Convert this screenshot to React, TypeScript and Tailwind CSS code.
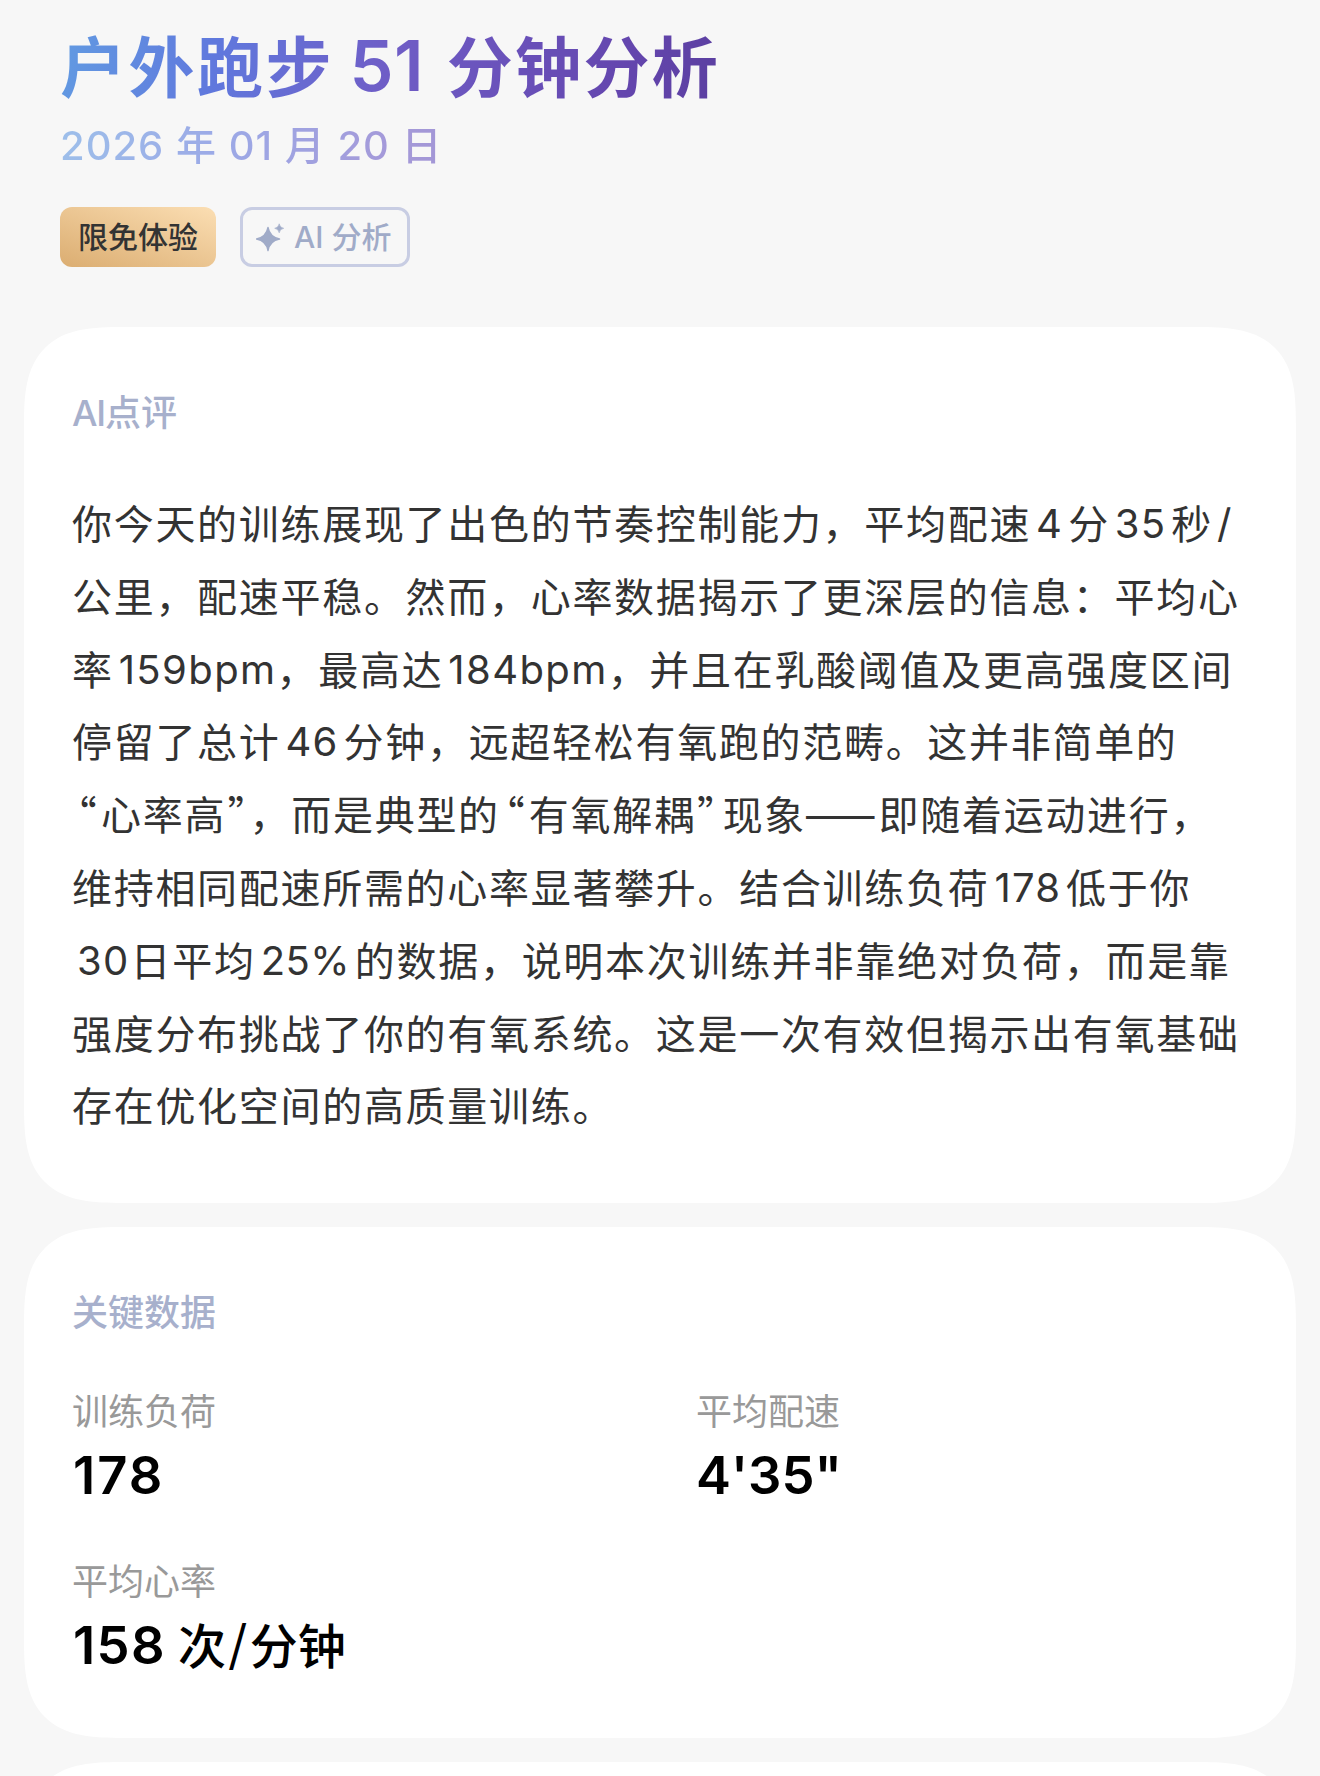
import type { ReactNode } from 'react';

const review = [
  '你今天的训练展现了出色的节奏控制能力，平均配速4分35秒/',
  '公里，配速平稳。然而，心率数据揭示了更深层的信息：平均心',
  '率159bpm，最高达184bpm，并且在乳酸阈值及更高强度区间',
  '停留了总计46分钟，远超轻松有氧跑的范畴。这并非简单的',
  '“心率高”，而是典型的“有氧解耦”现象——即随着运动进行，',
  '维持相同配速所需的心率显著攀升。结合训练负荷178低于你',
  '30日平均25%的数据，说明本次训练并非靠绝对负荷，而是靠',
  '强度分布挑战了你的有氧系统。这是一次有效但揭示出有氧基础',
  '存在优化空间的高质量训练。',
];

// Spacing classes for everything that is not a full-width Chinese character.
function runClass(part: string, next: string) {
  if (part === '“')
    return "inline-flex w-[29px] justify-end pr-[3px] font-['Noto_Sans_CJK_SC'] [font-feature-settings:'palt']";
  if (part === '”')
    return next.startsWith('，')
      ? "inline-flex w-[23.5px] justify-start pl-[2px] font-['Noto_Sans_CJK_SC'] [font-feature-settings:'palt']"
      : "inline-flex w-[27px] justify-start pl-[2px] font-['Noto_Sans_CJK_SC'] [font-feature-settings:'palt']";
  if (part === '——') return 'inline-flex w-[72.5px] justify-start align-[1px] text-[36px] tracking-[-3.5px]';
  if (part === '/') return 'ml-[4px] align-[1px]';
  if (part.endsWith('bpm')) return 'ml-[5px] align-[1px] tracking-[1.4px]';
  if (part.endsWith('%')) return 'mr-[5px] ml-[5px] align-[1px] tracking-[0.4px]';
  if (part === '30') return 'mr-px ml-[5px] align-[1px] tracking-[1.3px]';
  return 'mr-[5px] ml-[5px] align-[1px] tracking-[1.2px]';
}

function Line({ text }: { text: string }) {
  const parts = text.split(/([0-9a-z%]+|[“”/]|——)/);
  return (
    <span className="block h-[72.8px] whitespace-nowrap">
      {parts.map((part, i) =>
        i % 2 === 1 ? (
          <span key={i} className={`leading-none ${runClass(part, parts[i + 1])}`}>
            {part}
          </span>
        ) : (
          part
        ),
      )}
    </span>
  );
}

function Card({ title, children, className }: { title: ReactNode; children?: ReactNode; className: string }) {
  return (
    <section className={`rounded-[100px] bg-white px-12 [corner-shape:superellipse(1.56)] ${className}`}>
      <h2 className="text-[36px] leading-[48px] font-medium text-[#a7b0cc]">{title}</h2>
      {children}
    </section>
  );
}

function Metric({ label, children }: { label: string; children: ReactNode }) {
  return (
    <div>
      <div className="text-[36px] leading-[48px] text-[#999]">{label}</div>
      <div className="mt-px flex h-[76px] text-[52.5px] leading-[76px] font-semibold whitespace-pre text-black">{children}</div>
    </div>
  );
}

export default function App() {
  return (
    <div className="h-[1776px] w-[1320px] overflow-hidden bg-[#f7f7f7] px-6 font-['Inter','Noto_Sans_CJK_SC',sans-serif]">
      <header className="h-[327px] pt-[23px] pl-9">
        <h1 className="flex h-[84px] w-[660px] items-start bg-linear-[100deg,#629be2_0%,#6078dd_24%,#6f5dc6_50%,#6446ae_85%,#5b3fa0_100%] bg-clip-text text-[66px] leading-[84px] font-semibold whitespace-pre text-transparent">
          <span className="mt-[3px] tracking-[2.5px]">户外跑步</span>
          <span className="mt-px ml-[15.5px] text-[70px] tracking-[0.5px]">51</span>
          <span className="mt-[3px] ml-[22.5px] tracking-[2.4px]">分钟分析</span>
        </h1>
        <p className="mt-[2px] h-[72px] w-[660px] bg-linear-[100deg,#629be2_0%,#6078dd_24%,#6f5dc6_50%,#6446ae_85%,#5b3fa0_100%] bg-clip-text text-[40px] leading-[73px] font-medium tracking-[1px] text-transparent opacity-60">
          2026 年 01 月 20 日
        </p>
        <div className="mt-[26px] flex gap-6">
          <span className="flex h-[60px] w-[156px] items-center justify-center rounded-[12px] bg-linear-[20deg,#dbad71,#fbdeb3] text-[30px] font-medium text-[#333]">
            限免体验
          </span>
          <span className="flex h-[60px] w-[170px] items-center rounded-[12px] border-3 border-[#c8cde3] pl-[13px] text-[30px] font-medium whitespace-pre text-[#a0abc8]">
            <svg width="30" height="30" viewBox="0 0 30 30" fill="currentColor">
              <path d="M12 5.500Q13.800 15.200 23.500 17Q13.800 18.800 12 28.500Q10.200 18.800 0.500 17Q10.200 15.200 12 5.500Z" stroke="currentColor" strokeWidth="1.4" strokeLinejoin="round" />
              <path d="M23.200 1.800Q23.800 5.700 27.700 6.300Q23.800 6.900 23.200 10.800Q22.600 6.900 18.700 6.300Q22.600 5.700 23.200 1.800Z" stroke="currentColor" strokeWidth="0.6" strokeLinejoin="round" />
            </svg>
            <span className="ml-[8px]">AI</span>
            <span className="ml-[8px]">分析</span>
          </span>
        </div>
      </header>

      <Card title={<><span className="tracking-[-1.2px]">AI</span>点评</>} className="h-[876px] pt-[62px]">
        <p className="mt-[52px] text-[40px] leading-[72.8px] tracking-[1.7px] text-[#333]">
          {review.map((text) => (
            <Line key={text} text={text} />
          ))}
        </p>
      </Card>

      <Card title="关键数据" className="mt-6 h-[511px] pt-[62px]">
        <div className="mt-[51px] grid grid-cols-[624px_1fr] gap-y-[45px]">
          <Metric label="训练负荷">
            <span className="ml-px tracking-[2px]">178</span>
          </Metric>
          <Metric label="平均配速">4'35"</Metric>
          <Metric label="平均心率">
            <span className="ml-px tracking-[1.4px]">158</span>
            <span className="-mt-[2px] ml-[12px] text-[48px] font-medium font-['Noto_Sans_CJK_SC']">
              次<span className="mx-[2.5px] align-[3px] leading-none">/</span>分钟
            </span>
          </Metric>
        </div>
      </Card>

      <section className="mt-6 h-[400px] rounded-[100px] bg-white [corner-shape:superellipse(1.56)]" />
    </div>
  );
}
